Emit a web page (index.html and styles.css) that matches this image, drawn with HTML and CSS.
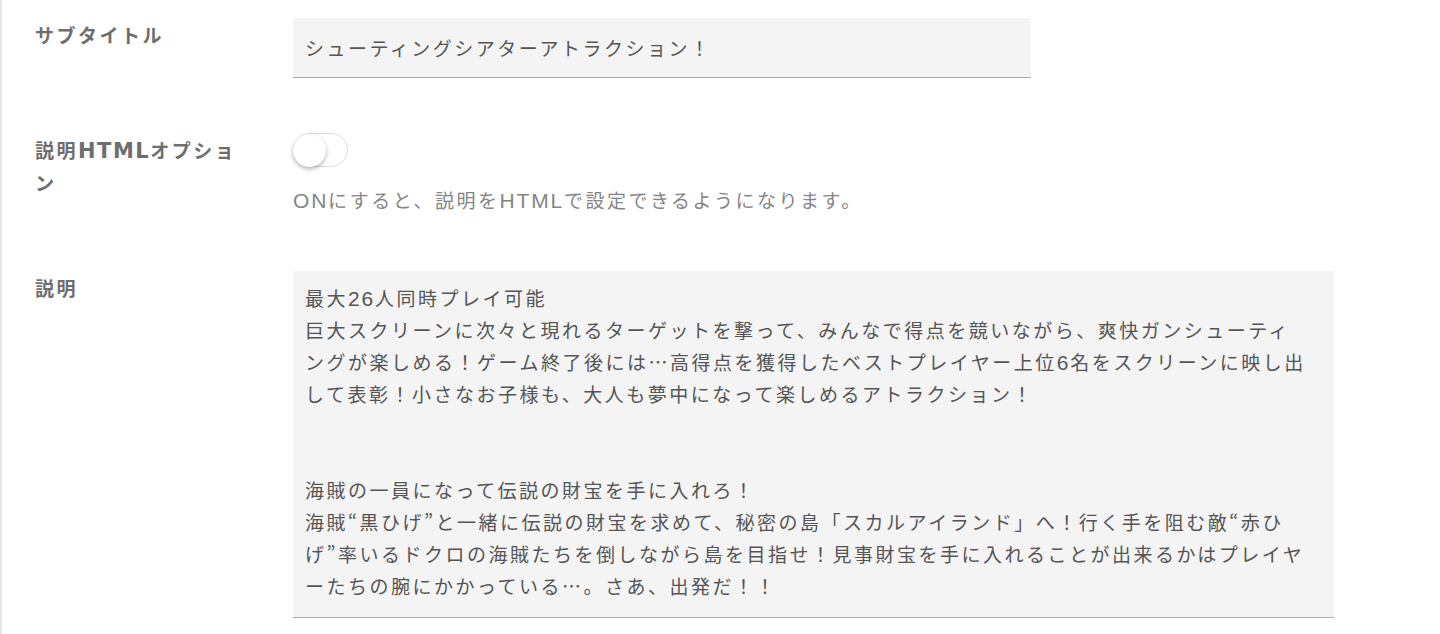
FILE: index.html
```html
<!DOCTYPE html>
<html lang="ja">
<head>
<meta charset="utf-8">
<title>フォーム</title>
<link rel="stylesheet" href="styles.css">
</head>
<body>
<div class="page">
  <div class="form">
    <div class="row">
      <div class="label">サブタイトル</div>
      <div class="field">
        <div class="input">シューティングシアターアトラクション！</div>
      </div>
    </div>
    <div class="row">
      <div class="label">説明<span class="en">HTML</span>オプション</div>
      <div class="field">
        <div class="toggle"><span class="knob"></span></div>
        <div class="hint"><span class="en">ON</span>にすると、説明を<span class="en">HTML</span>で設定できるようになります。</div>
      </div>
    </div>
    <div class="row row-last">
      <div class="label">説明</div>
      <div class="field">
        <div class="textarea">最大<span class="en">26</span>人同時プレイ可能
巨大スクリーンに次々と現れるターゲットを撃って、みんなで得点を競いながら、爽快ガンシューティングが楽しめる！ゲーム終了後には…高得点を獲得したベストプレイヤー上位<span class="en">6</span>名をスクリーンに映し出して表彰！小さなお子様も、大人も夢中になって楽しめるアトラクション！


海賊の一員になって伝説の財宝を手に入れろ！
海賊“黒ひげ”と一緒に伝説の財宝を求めて、秘密の島「スカルアイランド」へ！行く手を阻む敵“赤ひげ”率いるドクロの海賊たちを倒しながら島を目指せ！見事財宝を手に入れることが出来るかはプレイヤーたちの腕にかかっている…。さあ、出発だ！！</div>
      </div>
    </div>
  </div>
</div>
</body>
</html>
```
FILE: styles.css
```css
html, body {
  margin: 0;
  padding: 0;
  background: #ffffff;
}

body {
  font-family: "Noto Sans CJK JP", "Noto Sans", sans-serif;
  font-size: 19px;
  letter-spacing: 2.5px;
  color: #555555;
}

.page {
  border-left: 2px solid #e8e8e8;
  min-height: 634px;
  box-sizing: border-box;
}

.form {
  padding: 18px 0 0 33px;
}

.row {
  display: flex;
  align-items: flex-start;
  margin-bottom: 55px;
}

.row-last {
  margin-bottom: 0;
}

.label {
  width: 205px;
  flex: none;
  margin-right: 53px;
  font-weight: 700;
  color: #6e6e6e;
  line-height: 33px;
}

.en {
  font-family: "Liberation Sans", "Noto Sans", sans-serif;
  font-size: 21px;
  line-height: 1;
  letter-spacing: 1.8px;
}

.label .en {
  font-family: "DejaVu Sans", "Liberation Sans", sans-serif;
  font-size: 21px;
  letter-spacing: 1.5px;
}

.field {
  flex: none;
}

.input {
  width: 738px;
  height: 60px;
  box-sizing: border-box;
  padding: 0 12px;
  background: #f4f4f4;
  border-bottom: 1px solid #aaaaaa;
  display: flex;
  align-items: center;
  color: #555555;
}

.toggle {
  width: 55px;
  height: 34px;
  box-sizing: border-box;
  border: 1px solid #dcdcdc;
  border-radius: 17px;
  background: #ffffff;
  display: flex;
  align-items: center;
}

.knob {
  width: 33px;
  height: 33px;
  margin-left: -1px;
  border-radius: 50%;
  background: #ffffff;
  box-shadow: 0 2px 4px rgba(0, 0, 0, 0.3);
}

.hint {
  margin-top: 17px;
  line-height: 32px;
  color: #858585;
}

.textarea {
  width: 1041px;
  box-sizing: border-box;
  padding: 11px 28px 15px 12px;
  background: #f4f4f4;
  border-bottom: 1px solid #aaaaaa;
  white-space: pre-wrap;
  line-height: 32px;
  color: #555555;
}
```
